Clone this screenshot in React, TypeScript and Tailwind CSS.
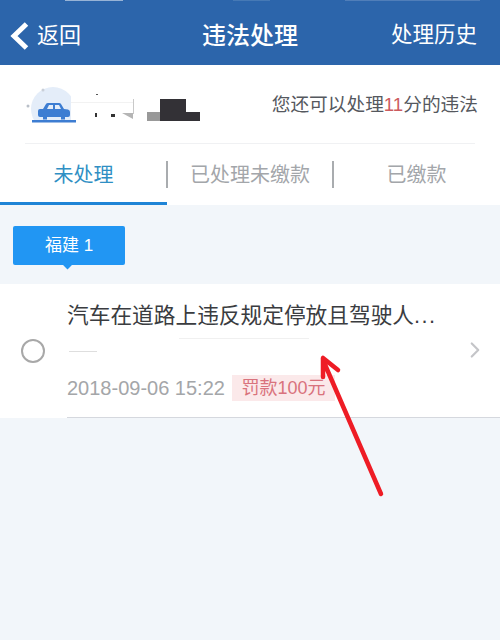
import React from 'react';
import { ChevronRight } from 'lucide-react';

// car illustration plus the smudged-out plate number next to it
function PlateBadge() {
  return (
    <svg width="180" height="44" viewBox="0 0 180 44" className="shrink-0">
      <circle cx="28" cy="27" r="22" fill="#e4edf9" />
      <rect x="46" y="0" width="134" height="44" fill="#ffffff" />
      <rect x="0" y="39" width="60" height="5" fill="#ffffff" />
      <circle cx="18" cy="8" r="1.5" fill="#c9cfd8" />
      <circle cx="3" cy="24" r="1.5" fill="#b9bfc8" />
      <path d="M13 29 Q13 27 15 27 L18 27 L21 22 Q21.5 21 23 21 L34 21 Q35.5 21 36 22 L39 27 L43 27.5 Q45 28 45 30 L45 33 Q45 35 43 35 L15 35 Q13 35 13 33 Z" fill="#3d7dd2" />
      <path d="M22 27 L24 23 L28 23 L28 27 Z M30 23 L34 23 L36 27 L30 27 Z" fill="#e4edf9" />
      <rect x="18" y="35" width="4" height="2.5" fill="#3d7dd2" />
      <rect x="36" y="35" width="4" height="2.5" fill="#3d7dd2" />
      <rect x="7" y="38" width="44" height="2.5" fill="#3d7dd2" />
      <rect x="71" y="12" width="2" height="1" fill="#555" />
      <rect x="70" y="31" width="2" height="4" fill="#333" />
      <rect x="86" y="32" width="4" height="3" fill="#333" />
      <rect x="46" y="20" width="62" height="1" fill="#f2f2f2" />
      <rect x="108" y="17" width="1" height="15" fill="#c9c9c9" />
      <path d="M97 31 L108 37 L108 31 Z" fill="#b5b5b5" />
      <rect x="122" y="30" width="13" height="9" fill="#999999" />
      <path d="M135 17 L161 17 L161 30 L175 30 L175 39 L135 39 Z" fill="#333136" />
    </svg>
  );
}

export default function App() {
  return (
    <div className="relative h-[640px] w-[500px] overflow-hidden bg-[#f2f6fa] font-['Liberation_Sans','Noto_Sans_CJK_SC',sans-serif]">
      {/* Top bar */}
      <header className="flex h-[65px] items-center justify-between bg-[#2c65ab] pl-[8px] pr-[23px] pt-[7px] text-white">
        <div className="flex items-center">
          <svg width="26" height="34" viewBox="0 0 26 34" fill="none">
            <path d="M18.5 5 L6 17 L18.5 29" stroke="#ffffff" strokeWidth="5" />
          </svg>
          <span className="ml-[3px] text-[22px] leading-none">返回</span>
        </div>
        <span className="absolute left-[202px] text-[24px] font-medium leading-none">违法处理</span>
        <span className="text-[21.5px] leading-none">处理历史</span>
      </header>

      <section className="bg-white">
        <div className="mx-[25px] flex h-[79px] items-center justify-between border-b border-[#f0f1f3]">
          <PlateBadge />
          <p className="-mr-[3px] mt-[3px] whitespace-nowrap text-[18.7px] leading-none text-[#55585e]">
            您还可以处理<span className="text-[#cc5a5e]">11</span>分的违法
          </p>
        </div>

        {/* Tabs */}
        <div className="flex h-[61px]">
          <div className="flex w-[167px] items-center justify-center border-b-[3px] border-[#1f84d6] pt-[3px] text-[20px] text-[#2f8fc4]">未处理</div>
          <div className="flex w-[166px] items-center justify-center border-b-[3px] border-transparent pt-[3px] text-[20px] text-[#a3a6aa]">
            <span className="flex h-[27px] w-[168px] shrink-0 items-center justify-center border-x-2 border-[#a9acaf]">已处理未缴款</span>
          </div>
          <div className="flex flex-1 items-center justify-center border-b-[3px] border-transparent pt-[3px] text-[20px] text-[#a3a6aa]">已缴款</div>
        </div>
      </section>

      {/* Province tag */}
      <div className="pb-[19px] pl-[13px] pt-[21px]">
        <div className="relative flex h-[39px] w-[112px] items-center justify-center rounded-[2px] bg-[#2196f3] text-[17px] text-white">
          福建 1
          <span className="absolute left-[51px] top-[35px] h-[7px] w-[7px] rotate-45 bg-[#2196f3]" />
        </div>
      </div>

      {/* Violation row */}
      <div className="relative flex h-[134px] items-center bg-white">
        <span className="ml-[21px] h-[24px] w-[24px] shrink-0 rounded-full border-2 border-[#a8a8a8]" />
        <div className="ml-[22px] flex h-full min-w-0 flex-1 flex-col border-b border-[#d5d8de]">
          <p className="mt-[17px] whitespace-nowrap text-[21.7px] leading-[30px] text-[#3a3c40]">
            汽车在道路上违反规定停放且驾驶人<span className="tracking-[1.5px]">...</span>
          </p>
          <div className="mt-[5px] flex h-[19px] items-end gap-[2px] pl-[2px]">
            <span className="mb-[3px] h-px w-[28px] bg-[#dedede]" />
            <span className="mb-[16px] ml-[80px] h-px w-[130px] bg-[#f0f0f0]" />
          </div>
          <div className="mt-[20px] flex items-center">
            <span className="text-[20px] leading-none text-[#a4a6a9]">2018-09-06 15:22</span>
            <span className="ml-[7px] flex h-[26px] w-[103px] items-center justify-center bg-[#fbe9ea] text-[18px] leading-none text-[#d9737d]">罚款100元</span>
          </div>
        </div>
        <ChevronRight className="absolute left-[462px] top-[53px] h-[26px] w-[26px] text-[#c4c5c8]" strokeWidth={2} />
      </div>

      {/* Status bar leftovers and the hand-drawn arrow on top of the screenshot */}
      <svg className="absolute left-0 top-0" width="500" height="640" viewBox="0 0 500 640" fill="none">
        <rect x="65" y="0" width="58" height="1" fill="#dfe8f3" opacity="0.6" />
        <rect x="233" y="0" width="37" height="1" fill="#dfe8f3" opacity="0.15" />
        <rect x="345" y="0" width="135" height="1" fill="#dfe8f3" opacity="0.2" />
        <path d="M381 494 L323 360 M323 358 L323 377 M323 358 L338 370" stroke="#ee1c25" strokeWidth="4.5" strokeLinecap="round" />
      </svg>
    </div>
  );
}
